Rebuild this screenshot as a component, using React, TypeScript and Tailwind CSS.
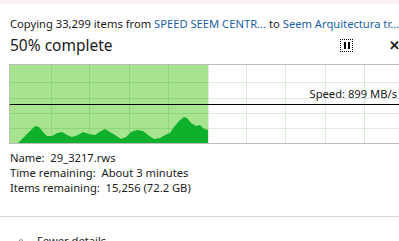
import { ChevronUp } from "lucide-react";

const W = 400;
const H = 78;
const vLines = [41, 79, 119, 158, 198, 236, 275, 315, 354, 393];
const hLines = [17, 33, 48, 63];
const pts: [number, number][] = [
  [8, 78], [14, 72], [20, 66], [25, 61], [29, 62], [33, 67], [37, 71], [42, 71],
  [47, 68], [52, 67], [57, 70], [62, 72], [68, 70], [73, 67], [79, 69], [85, 70],
  [91, 66], [95, 64], [100, 67], [105, 70], [111, 74], [116, 72], [121, 67],
  [127, 65], [133, 66], [138, 70], [144, 74], [150, 73], [155, 70], [160, 68],
  [164, 62], [169, 56], [174, 52], [177, 53], [181, 58], [186, 61], [190, 60],
  [194, 64], [198, 65], [198, 61],
];

const Chart = () => {
  const area = "M0," + H + " " + pts.map(([x, y]) => `L${x},${y}`).join(" ") + ` L198,${H} Z`;
  return (
    <div className="ml-[9px] w-[400px] h-[80px] border border-[#bcbcbc] bg-white">
      <svg width={W} height={H} className="block">
        <rect x={0} y={0} width={198} height={H} fill="#a6e48f" />
        {vLines.map((x) => (
          <line key={x} x1={x + 0.5} y1={0} x2={x + 0.5} y2={H} stroke={x < 198 ? "#8fd37a" : "#dcebdc"} />
        ))}
        {hLines.map((y) => (
          <g key={y}>
            <line x1={0} y1={y + 0.5} x2={198} y2={y + 0.5} stroke="#8fd37a" />
            <line x1={198} y1={y + 0.5} x2={W} y2={y + 0.5} stroke="#dcebdc" />
          </g>
        ))}
        <path d={area} fill="#0fb02a" />
        <line x1={0} y1={39.5} x2={W} y2={39.5} stroke="#000" />
      </svg>
    </div>
  );
};

const App = () => {
  return (
    <div className="w-[399px] h-[241px] overflow-hidden bg-white font-['Noto_Sans',sans-serif] text-[#1a1a1a] relative">
      <div className="h-[4px] bg-[#fdf2f3]" />
      <p className="px-[10px] pt-[12px] text-[11.2px] leading-[15px] whitespace-nowrap">
        Copying 33,299 items from <span className="text-[#1a5fa8]">SPEED SEEM CENTR...</span> to{" "}
        <span className="text-[#1a5fa8]">Seem Arquitectura tr...</span>
      </p>
      <div className="flex items-center px-[10px] mt-[4px] h-[20px]">
        <span className="text-[15.5px] leading-[20px]">50% complete</span>
        <div className="ml-auto mr-[36px] w-[13px] h-[13px] border border-dotted border-black flex items-center justify-center gap-[2px]">
          <span className="w-[2px] h-[7px] bg-black" />
          <span className="w-[2px] h-[7px] bg-black" />
        </div>
      </div>
      <span className="absolute left-[389px] top-[38px] text-[13px] leading-[14px] font-bold">✕</span>
      <div className="relative mt-[9px]">
        <Chart />
        <span className="absolute right-[2px] top-[22px] text-[11.2px] leading-[15px]">Speed: 899 MB/s</span>
      </div>
      <div className="px-[10px] mt-[6px] text-[11.2px] leading-[15px]">
        <p>Name:&nbsp; 29_3217.rws</p>
        <p>Time remaining:&nbsp; About 3 minutes</p>
        <p>Items remaining:&nbsp; 15,256 (72.2 GB)</p>
      </div>
      <div className="mt-[21px] border-t border-[#dadada]" />
      <div className="h-[4px] bg-[#fafafa]" />
      <div className="flex items-center gap-[9px] px-[14px] mt-[12px] text-[11.2px] leading-[15px]">
        <ChevronUp size={14} strokeWidth={1.2} className="text-[#333]" />
        <span>Fewer details</span>
      </div>
    </div>
  );
};

export default App;
